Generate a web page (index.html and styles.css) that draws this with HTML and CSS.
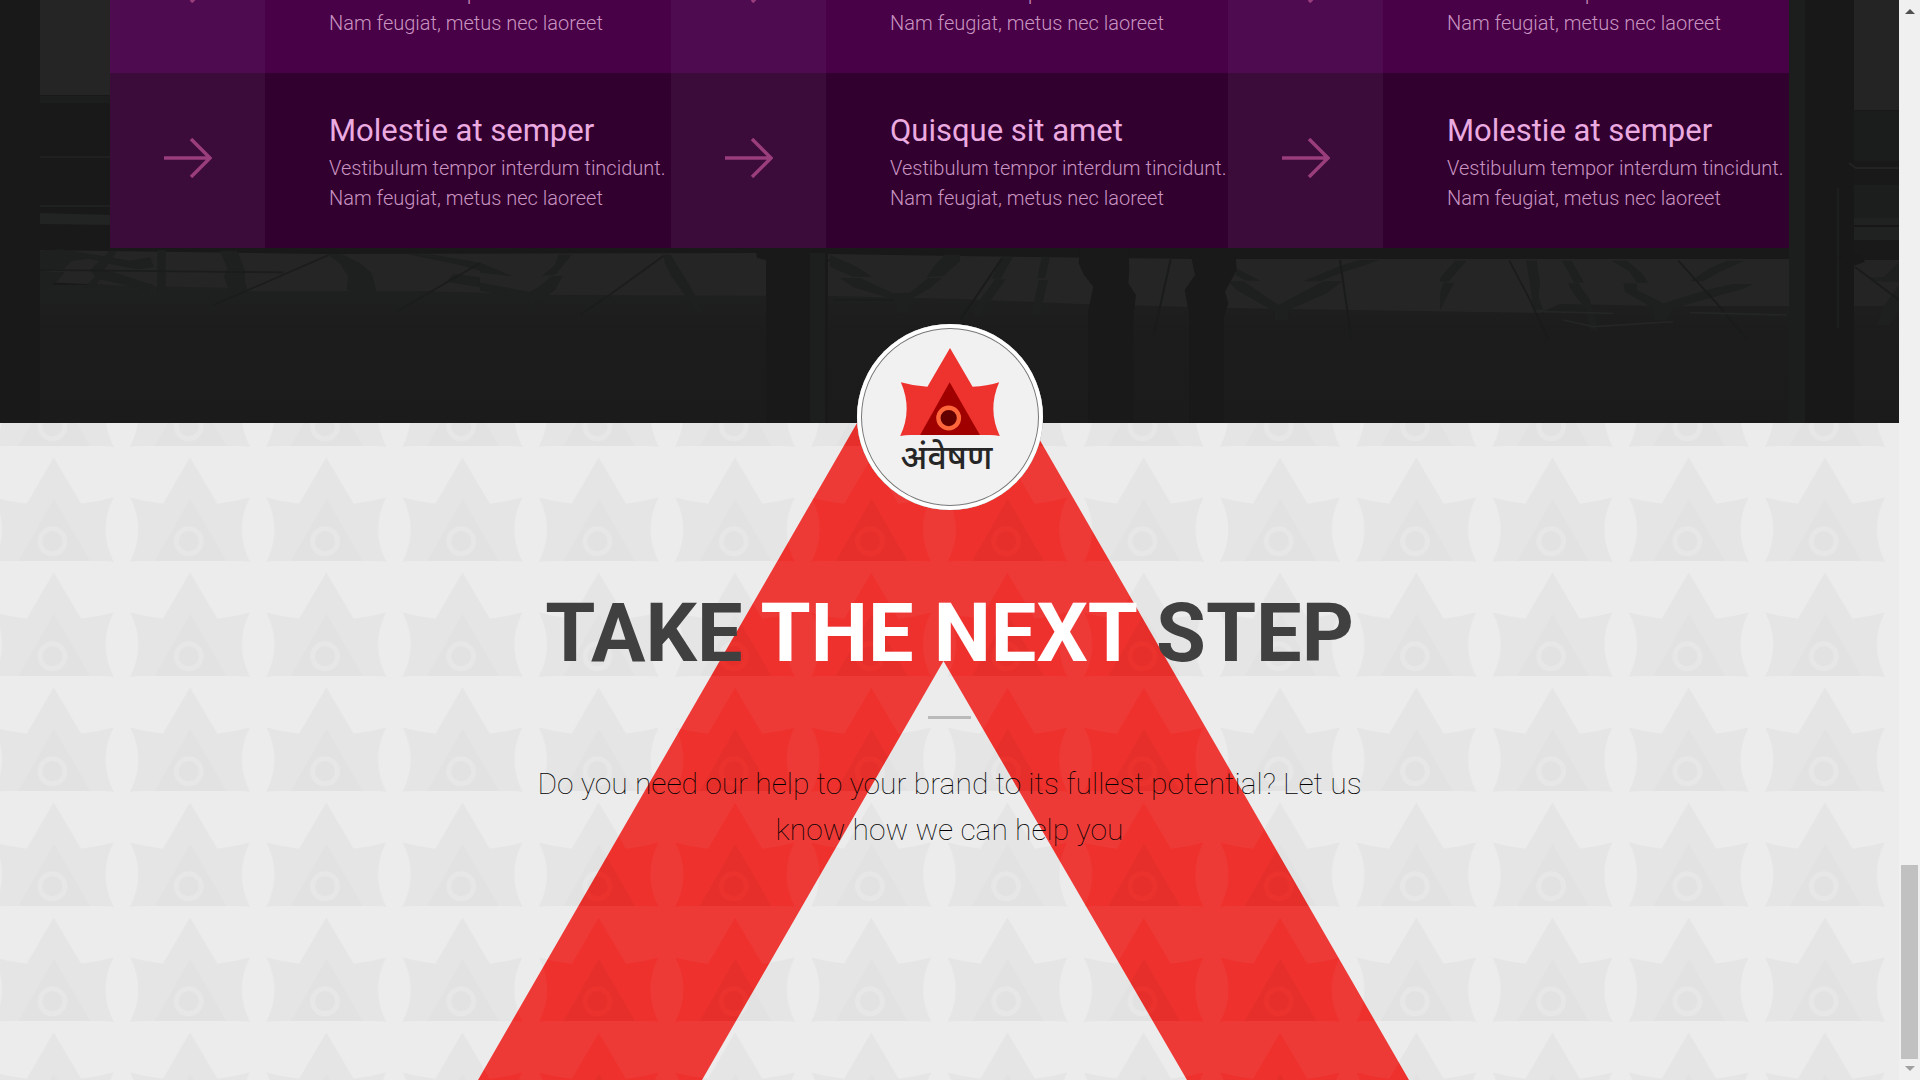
FILE: index.html
```html
<!DOCTYPE html>
<html lang="en">
<head>
<meta charset="utf-8">
<meta name="viewport" content="width=device-width, initial-scale=1">
<title>Take the next step</title>
<link rel="stylesheet" href="styles.css">
</head>
<body>
<main class="page">
  <section class="services">
    <svg class="services-photo" viewBox="0 0 1899 423" preserveAspectRatio="xMidYMax slice" aria-hidden="true">
      <defs>
        <linearGradient id="floor" x1="0" y1="0" x2="0" y2="1">
          <stop offset="0" stop-color="#1f2120"/>
          <stop offset=".35" stop-color="#1b1c1b"/>
          <stop offset="1" stop-color="#1a1b1a"/>
        </linearGradient>
        <symbol id="arrow" viewBox="0 0 48 40">
          <path d="M0 20H46M27 1L46 20L27 39" fill="none" stroke="#993d7d" stroke-width="3.500"/>
        </symbol>
      </defs>
      <rect width="1899" height="423" fill="#191919"/>
      <rect x="40" width="72" height="95" fill="#252525"/>
      <path d="M40 96H112V103H40z" fill="#1c1e1d"/>
      <path d="M40 157H112M40 206H112" stroke="#1f2020" stroke-width="2"/>
      <path d="M40 213L112 215V225L40 224z" fill="#222323"/>
      <rect x="40" y="285" width="1859" height="138" fill="url(#floor)"/>
      <path d="M40 250L320 254L766 253L960 256L1200 259H1790V306L1660 306L1560 304L1540 313L1350 310L1230 308L1080 304L960 299L830 296L560 295L420 291L250 291L240 288L130 286L40 282z" fill="#252525"/>

      <g fill="#1d201f" stroke="none" transform="translate(0 240) scale(.33333)">
        <path d="M120 32L190 28L215 40L130 92L160 96L195 95L175 120L140 150H120zM200 30L390 62L450 52L462 82L410 88L330 72L270 56L215 62L190 88H120L195 50zM310 92L345 98L462 136L440 150L300 118L280 145H250L285 110L270 90L330 32H352zM472 30H497V160H472zM660 32H712L735 92L735 125L745 160H690L672 110L682 85zM980 42H1025L1080 70L1115 100L1130 156H1070L1040 150L1045 110L1020 70zM1220 42L1300 44L1440 68V92L1380 75zM1360 102L1440 112V142L1340 125z"/>
        <path d="M120 90L850 97M640 195L745 150L860 100L985 46M1190 215L1310 145L1440 70" fill="none" stroke="#1b1c1c" stroke-width="5"/>
      </g>
      <g fill="#1d201f" transform="translate(480 240) scale(.33333)">
        <path d="M0 68L60 92L95 108L0 98zM0 128L150 156L185 135L215 108H248L225 150L150 200L150 178L80 166L0 152zM235 44H275L225 105L187 107L225 75zM550 44H572L605 98L612 108L645 165L670 215H650L600 145L575 110L555 70zM1050 45L1130 80L1175 110H1120L1050 80zM1080 114H1140L1240 160L1290 158L1345 114H1385L1350 145L1290 178L1285 220H1250V180L1120 142zM1395 44H1440V64L1390 108L1340 112L1362 78z"/>
        <path d="M300 225L390 164L550 48M990 112L1050 58M1060 180H1240" fill="none" stroke="#1b1c1c" stroke-width="5"/>
      </g>
      <path d="M756 252L765 248H812V423H766V260L757 258z" fill="#191919"/>
      <rect x="810" y="253" width="16" height="170" fill="#1d1f1e"/>
      <rect x="825" y="253" width="3" height="170" fill="#191919"/>
      <g fill="#1d201f" transform="translate(960 240) scale(.33333)">
        <path d="M125 52H158L122 116H95zM105 118H138L70 210V225H40L42 205zM245 50H270L255 115H232zM236 120H264L240 225H215L222 185zM828 85L900 122H860L825 105zM805 124H850L955 195L1090 124H1147L1100 160L985 210V240H945V215L830 150zM1030 124L1140 78L1200 60H1260L1140 100L1080 124z"/>
        <path d="M0 240L45 175L125 56M580 290L632 58M1140 60L1158 185L1175 300" fill="none" stroke="#1a1b1b" stroke-width="6"/>
      </g>
      <g fill="#191919" transform="translate(960 240) scale(.33333)">
        <path d="M360 24H505L508 90L505 130L528 165L520 230V549H385L385 210L400 140L372 105L356 70z"/>
        <path d="M688 24H825L830 90L795 155L805 190L792 230V549H688V225L674 150L705 105z"/>
      </g>
      <g fill="#1d201f" transform="translate(1440 150) scale(.33333)">
        <path d="M45 332H80L25 395H0V385zM10 398H42L0 480V430zM258 332H290L300 400L295 440L310 480H280L270 400zM365 332H395L432 398H402L385 365zM385 400H415L450 450L475 540H450L440 480L400 430zM515 332H560L605 370L625 398H590L570 365zM550 400H590V420L670 460L800 420L880 402H940L910 416L700 475L680 510H640V475L555 425zM750 394L810 355L860 332H915L850 360L790 394z"/>
        <path d="M208 332L265 440L325 568M715 332L830 460L920 568" fill="none" stroke="#1a1b1b" stroke-width="5"/>
        <path d="M310 485L520 490M370 510L460 530L700 515M750 488L1040 495" fill="none" stroke="#242626" stroke-width="5"/>
      </g>
      <rect x="1789" width="16" height="423" fill="#1c1d1d"/>
      <rect x="1805" width="49" height="423" fill="#181818"/>
      <rect x="1837" y="188" width="2" height="140" fill="#1d1e1e"/>
      <rect x="1854" width="45" height="110" fill="#242424"/>
      <rect x="1854" y="111" width="45" height="50" fill="#1b1c1c"/>
      <path d="M1849 163L1856 168H1899" fill="none" stroke="#232323" stroke-width="2"/>
      <rect x="1854" y="185" width="45" height="33" fill="#1c1d1d"/>
      <path d="M1854 218H1899V240H1854z" fill="#202121"/>
      <path d="M1854 226H1899" stroke="#171717" stroke-width="2"/>
      <path d="M1854 260H1899V306H1854z" fill="#242424"/>
      <path d="M1868 278L1884 277L1899 262V282L1874 281zM1899 285L1884 306L1876 325H1890L1899 310z" fill="#1d201f"/>
      <path d="M1855 267L1899 300" fill="none" stroke="#1a1b1b" stroke-width="2"/>
      <path d="M1838 257L1860 254L1865 262L1850 267z" fill="#181818"/>
    </svg>

    <div class="service-grid">
      <article class="service service-clipped">
        <div class="service-icon"><svg class="arrow" aria-hidden="true"><use href="#arrow"/></svg></div>
        <div class="service-text"><p>Vestibulum tempor interdum tincidunt.<br>Nam feugiat, metus nec laoreet</p></div>
      </article>
      <article class="service service-clipped">
        <div class="service-icon"><svg class="arrow" aria-hidden="true"><use href="#arrow"/></svg></div>
        <div class="service-text"><p>Vestibulum tempor interdum tincidunt.<br>Nam feugiat, metus nec laoreet</p></div>
      </article>
      <article class="service service-clipped">
        <div class="service-icon"><svg class="arrow" aria-hidden="true"><use href="#arrow"/></svg></div>
        <div class="service-text"><p>Vestibulum tempor interdum tincidunt.<br>Nam feugiat, metus nec laoreet</p></div>
      </article>
      <article class="service service-dark">
        <div class="service-icon"><svg class="arrow" aria-hidden="true"><use href="#arrow"/></svg></div>
        <div class="service-text"><h3>Molestie at semper</h3><p>Vestibulum tempor interdum tincidunt.<br>Nam feugiat, metus nec laoreet</p></div>
      </article>
      <article class="service service-dark">
        <div class="service-icon"><svg class="arrow" aria-hidden="true"><use href="#arrow"/></svg></div>
        <div class="service-text"><h3>Quisque sit amet</h3><p>Vestibulum tempor interdum tincidunt.<br>Nam feugiat, metus nec laoreet</p></div>
      </article>
      <article class="service service-dark">
        <div class="service-icon"><svg class="arrow" aria-hidden="true"><use href="#arrow"/></svg></div>
        <div class="service-text"><h3>Molestie at semper</h3><p>Vestibulum tempor interdum tincidunt.<br>Nam feugiat, metus nec laoreet</p></div>
      </article>
    </div>
  </section>

  <section class="cta">
    <svg class="cta-backdrop" viewBox="0 0 1899 657" preserveAspectRatio="xMidYMin slice" aria-hidden="true">
      <defs>
        <path id="star" d="M60 9.500L87.300 55.700Q104 54 119.700 49.500Q103.700 82 120 114Q116 113 108 113H12Q4 113 0 114Q16.500 82 .3 49.500Q16 54 33 55.700z"/>
        <path id="eye-triangle" d="M60.300 51L96.300 113H24.700z"/>
        <pattern id="stars-grey" patternUnits="userSpaceOnUse" x="130" y="25" width="136.25" height="115">
          <rect width="137" height="115" fill="#ececec"/>
          <use href="#star" fill="#e5e5e5"/>
          <use href="#eye-triangle" fill="#e2e2e2"/>
          <circle cx="58.700" cy="93.300" r="12.500" fill="none" stroke="#e7e7e7" stroke-width="5"/>
        </pattern>
        <pattern id="stars-red" patternUnits="userSpaceOnUse" x="130" y="25" width="136.25" height="115">
          <rect width="137" height="115" fill="#ee3a37"/>
          <use href="#star" fill="#ee312c"/>
          <use href="#eye-triangle" fill="#e62e2a"/>
          <circle cx="58.700" cy="93.300" r="12.500" fill="none" stroke="#eb322d" stroke-width="5"/>
        </pattern>
      </defs>
      <rect width="1899" height="657" fill="url(#stars-grey)"/>
      <path d="M857 0H1030L1409 657H1187L943.500 238L702 657H478z" fill="url(#stars-red)"/>
    </svg>

    <a class="badge" href="#">
      <svg class="badge-mark" viewBox="0 0 300 265" aria-hidden="true">
        <path d="M150 0L218 117Q262 114 298 103Q262 185 300 265Q285 262 270 262H30Q15 262 0 265Q38 185 2 103Q40 114 82 117z" fill="#ee322d"/>
        <path d="M149 103L240 262H60z" fill="#a00000"/>
        <circle cx="146" cy="211" r="31" fill="#640000" stroke="#ff663c" stroke-width="13"/>
      </svg>
      <span class="badge-name" lang="hi">अंवेषण</span>
    </a>

    <h2>TAKE <span>THE NEXT</span> STEP</h2>
    <hr>
    <p class="cta-lead">Do you need our help to your brand to its fullest potential? Let us know how we can help you</p>
  </section>
</main>

<div class="scrollbar" aria-hidden="true">
  <svg class="scroll-arrow" viewBox="0 0 10 5"><path d="M5 0L10 5H0z" fill="#505050"/></svg>
  <div class="scroll-thumb"></div>
  <svg class="scroll-arrow" viewBox="0 0 10 5"><path d="M0 0H10L5 5z" fill="#a0a0a0"/></svg>
</div>
</body>
</html>
```
FILE: styles.css
```css
* {
  box-sizing: border-box;
}

body {
  margin: 0;
  height: 100vh;
  display: grid;
  grid-template-columns: minmax(0, 1fr) 21px;
  overflow: hidden;
  font-family: Roboto, "Noto Sans", sans-serif;
}

.page {
  display: flex;
  flex-direction: column;
  min-height: 0;
  overflow: hidden;
}

/* Services */
.services {
  position: relative;
  flex: none;
  padding: 0 110px 175px;
  background: #191919;
}

.services-photo {
  position: absolute;
  inset: 0;
  width: 100%;
  height: 100%;
}

.service-grid {
  position: relative;
  display: grid;
  grid-template-columns: 561fr 557fr 561fr;
}

.service {
  display: grid;
  grid-template-columns: 155px minmax(0, 1fr);
  background: #480046;
  color: #c994c1;
}

.service-clipped {
  height: 73px;
  align-content: end;
  align-items: end;
  overflow: hidden;
}

.service-icon {
  display: flex;
  align-items: center;
  justify-content: center;
  height: 175px;
  padding-bottom: 6px;
  background: #4f0b4f;
}

.service-dark {
  background: #31002f;
}

.service-dark .service-icon {
  background: #3b0b39;
}

.arrow {
  width: 48px;
  height: 40px;
}

.service-text {
  padding: 35px 0 35px 64px;
  white-space: nowrap;
}

.service-text h3 {
  margin: 0;
  font-size: 31px;
  font-weight: 400;
  line-height: 45px;
  color: #ebabe1;
}

.service-text p {
  margin: 0;
  font-size: 20px;
  font-weight: 300;
  line-height: 30px;
}

/* Call to action */
.cta {
  position: relative;
  flex: 1 0 auto;
  padding-top: 163px;
  background: #ececec;
  text-align: center;
}

.cta-backdrop {
  position: absolute;
  inset: 0;
  width: 100%;
  height: 100%;
}

.badge {
  position: absolute;
  top: -99px;
  left: 50%;
  width: 186px;
  height: 186px;
  margin-left: -93px;
  padding-top: 24px;
  display: flex;
  flex-direction: column;
  align-items: center;
  border-radius: 50%;
  background: #f1f1f1;
  box-shadow: inset 0 0 0 4px #fff, inset 0 0 0 5px #777;
  color: #262626;
  text-decoration: none;
}

.badge-mark {
  width: 100px;
  height: 88px;
}

.badge-name {
  padding-right: 6px;
  font-family: "Noto Sans", "Noto Sans Devanagari", sans-serif;
  font-size: 34px;
  font-weight: 500;
  line-height: 40px;
}

.cta h2 {
  position: relative;
  margin: 0;
  font-size: 81px;
  font-weight: 700;
  line-height: 96px;
  color: #404040;
}

.cta h2 span {
  color: #fff;
}

.cta hr {
  position: relative;
  width: 43px;
  height: 3px;
  margin: 34px auto 42px;
  border: 0;
  background: #bababa;
}

.cta-lead {
  position: relative;
  max-width: 840px;
  margin: 0 auto;
  font-size: 30px;
  font-weight: 100;
  line-height: 46px;
  color: #000;
}

/* Scrollbar */
.scrollbar {
  display: flex;
  flex-direction: column;
  align-items: center;
  padding: 9px 0;
  background: #f0f0f0;
}

.scroll-arrow {
  width: 10px;
  height: 5px;
}

.scroll-thumb {
  width: 17px;
  height: 194px;
  margin: auto 0 7px;
  background: #c1c1c1;
}
```
